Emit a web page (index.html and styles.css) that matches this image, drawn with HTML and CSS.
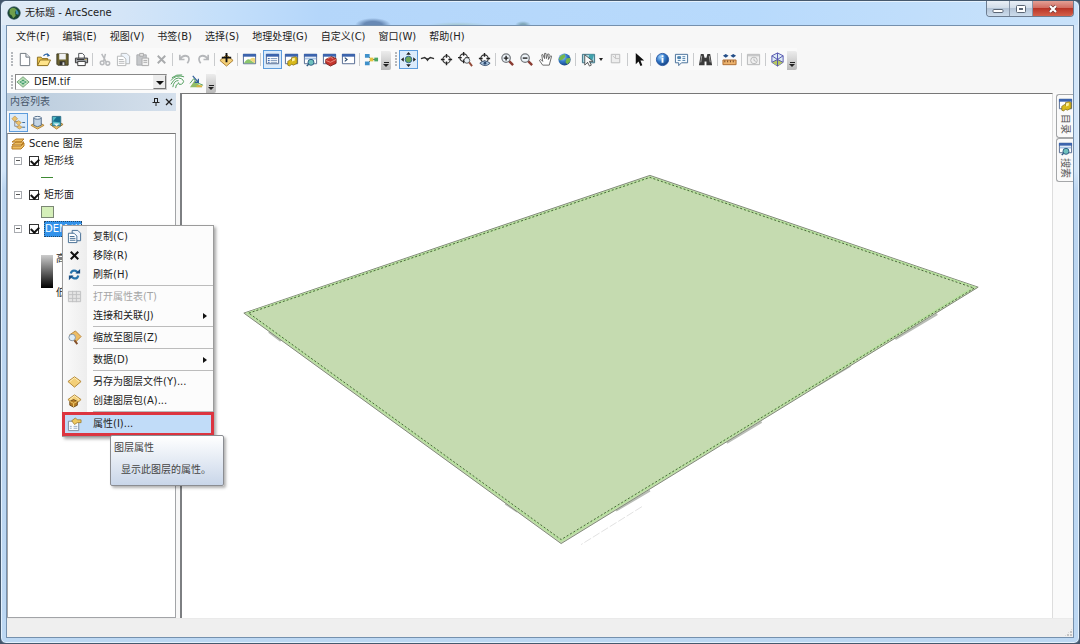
FILE: index.html
```html
<!DOCTYPE html>
<html lang="zh-CN">
<head>
    <meta charset="UTF-8">
    <meta name="viewport" content="width=device-width, initial-scale=1.0">
    <title>无标题 - ArcScene</title>
    <link rel="stylesheet" href="styles.css">
</head>
<body>
    <!-- Shared icons -->
    <svg class="defs" aria-hidden="true">
        <defs>
            <radialGradient id="globe" cx="35%" cy="30%" r="75%">
                <stop offset="0" stop-color="#a9d8ff"/>
                <stop offset="0.5" stop-color="#3279c9"/>
                <stop offset="1" stop-color="#173f7c"/>
            </radialGradient>
            <symbol id="i-window" viewBox="0 0 16 16">
                <path d="M1.500 2.500h13v10h-13z" fill="#fff" stroke="#51688f"/>
                <path d="M1 2h14v3H1z" fill="#3c64ad"/>
            </symbol>
            <symbol id="i-catalog" viewBox="0 0 16 16">
                <use href="#i-window"/>
                <path d="M4 10l3-2 1 1V6l4-1 2 1v6l-4 2-2-1-2 2-2-1z" fill="#d8b91c" stroke="#7a6510" stroke-width=".7"/>
                <path d="M8.500 7l3-1v3l-3 1z" fill="#fff3a0"/>
            </symbol>
            <symbol id="i-search" viewBox="0 0 16 16">
                <use href="#i-window"/>
                <path d="M2 6h12v2H2z" fill="#a9c5e6"/>
                <circle cx="8.500" cy="11" r="3.200" fill="#6fc0bd" stroke="#2c5c82"/>
                <path d="M6 13l-2 2" stroke="#2c5c82" stroke-width="1.500"/>
            </symbol>
            <symbol id="i-diamond" viewBox="0 0 16 16">
                <path d="M1 8l7-5 7 5-7 6z" fill="#f3cf78" stroke="#b18433"/>
                <path d="M3 8l5-4 5 4" fill="none" stroke="#fff0bd"/>
            </symbol>
            <symbol id="i-target" viewBox="0 0 16 16">
                <circle cx="8" cy="8" r="4" fill="none" stroke="#333" stroke-width="1.200"/>
                <path d="M8 2v4M8 10v4M2 8h4M10 8h4" stroke="#222" stroke-width="1.500"/>
            </symbol>
            <symbol id="i-copy" viewBox="0 0 16 16">
                <path d="M5.500 1.500h6l3 3v8h-9z" fill="#eef4fb" stroke="currentColor"/>
                <path d="M1.500 4.500h6l3 3v7h-9z" fill="#fff" stroke="currentColor"/>
                <path d="M3 8h5M3 10h6M3 12h6" stroke="currentColor"/>
            </symbol>
            <symbol id="i-glass" viewBox="0 0 16 16">
                <path d="M9 9l5 5" stroke="#8a3b32" stroke-width="2.500"/>
                <circle cx="6.500" cy="6.500" r="4.500" fill="#edf3f8" stroke="#73777c" stroke-width="1.300"/>
            </symbol>
            <symbol id="i-layer" viewBox="0 0 16 16">
                <path d="M1 8l7-6 7 6-7 6z" fill="#b9dfb5" stroke="#6c9a72"/>
                <path d="M4 8l4-3 4 3-4 3z" fill="#3f9c6d"/>
                <path d="M4 5.500l8 5M12 5.500l-8 5" stroke="#dff2dd" stroke-width=".8"/>
            </symbol>
        </defs>
    </svg>

    <div class="window">
        <header class="titlebar">
            <svg class="app-icon" viewBox="0 0 16 16"><circle cx="8" cy="8" r="7" fill="#1c4832"/><path d="M3 4q4-4 8 0l-2 3 1 4-3 3q-1-4-4-5z" fill="#6f9f4b"/><path d="M10 4q4 2 3 6l-3-1z" fill="#3b8cad"/><circle cx="8" cy="8" r="7" fill="none" stroke="#163c3d"/></svg>
            <h1 class="title">无标题 - ArcScene</h1>
            <div class="window-buttons">
                <button class="win-btn" aria-label="最小化"><svg viewBox="0 0 12 10"><rect x="1" y="5.500" width="10" height="3" rx="1" fill="#fff" stroke="#5b6675"/></svg></button>
                <button class="win-btn" aria-label="最大化"><svg viewBox="0 0 12 10"><rect x="1.500" y="1.500" width="9" height="7" rx="1" fill="#fff" stroke="#5b6675"/><rect x="4.500" y="4.500" width="3" height="1" fill="#8090a0" stroke="#5b6675"/></svg></button>
                <button class="win-btn close" aria-label="关闭"><svg viewBox="0 0 12 10"><path d="M3 2l6 6M9 2L3 8" stroke="#6d3330" stroke-width="3.500"/><path d="M3 2l6 6M9 2L3 8" stroke="#fff" stroke-width="2.200"/></svg></button>
            </div>
        </header>

        <div class="client">
            <nav class="menubar">
                <button>文件(F)</button>
                <button>编辑(E)</button>
                <button>视图(V)</button>
                <button>书签(B)</button>
                <button>选择(S)</button>
                <button>地理处理(G)</button>
                <button>自定义(C)</button>
                <button>窗口(W)</button>
                <button>帮助(H)</button>
            </nav>

            <div class="toolbar-row">
                <div class="toolbar">
                    <span class="grip"></span>
                    <button class="tool" aria-label="新建"><svg viewBox="0 0 16 16"><path d="M3.500 1.500h6l4 4v9h-10z" fill="#fff" stroke="#6d747c"/><path d="M9.500 1.500v4h4" fill="#e4e8ed" stroke="#6d747c"/></svg></button>
                    <button class="tool" aria-label="打开"><svg viewBox="0 0 16 16"><path d="M1.500 14V5.500h4l1 1.500h6v7z" fill="#e9c34f" stroke="#8b6d1c"/><path d="M1.500 14.500l3-6h11l-3 6z" fill="#ffe48a" stroke="#8b6d1c"/><path d="M8 4q3-3 5-1" fill="none" stroke="#2b64a5" stroke-width="1.300"/><path d="M12 1l3 3-3 1z" fill="#2b64a5"/></svg></button>
                    <button class="tool" aria-label="保存"><svg viewBox="0 0 16 16"><path d="M2 2h12v12H3l-1-1z" fill="#6c6331" stroke="#3e3b24"/><path d="M4.500 2h7v6h-7z" fill="#f1f2f3"/><path d="M5 10h6v4H5z" fill="#2f2f2f"/><path d="M8 11h2v3H8z" fill="#ddd"/></svg></button>
                    <button class="tool" aria-label="打印"><svg viewBox="0 0 16 16"><path d="M5 7V1.500h4l2 2V7" fill="#fff" stroke="#4b4e52"/><path d="M1.500 6.500h13v5h-13z" fill="#a5a9ad" stroke="#333"/><path d="M4 10h8v4.500H4z" fill="#fff" stroke="#333"/><path d="M3 8h8" stroke="#333"/><path d="M12 8h1" stroke="#e1bb31"/></svg></button>
                    <span class="sep"></span>
                    <button class="tool" aria-label="剪切" disabled><svg viewBox="0 0 16 16" fill="none" stroke="#b8babd" stroke-width="1.600"><path d="M5 2l5 9M9 2L7 10"/><circle cx="5.500" cy="11.500" r="2"/><circle cx="11.500" cy="12" r="2"/></svg></button>
                    <button class="tool muted" aria-label="复制" disabled><svg><use href="#i-copy"/></svg></button>
                    <button class="tool" aria-label="粘贴" disabled><svg viewBox="0 0 16 16"><path d="M2 3h10v11H2z" fill="#c5c7ca" stroke="#aaacaf"/><path d="M5 1.500h4v3H5z" fill="#e5e5e5" stroke="#aaa"/><path d="M7.500 6.500h7v8h-7z" fill="#f2f2f2" stroke="#aaa"/><path d="M9 9h4M9 11h4" stroke="#aaa"/></svg></button>
                    <button class="tool" aria-label="删除" disabled><svg viewBox="0 0 16 16"><path d="M4 4l8 8M12 4l-8 8" stroke="#a9abad" stroke-width="2"/></svg></button>
                    <span class="sep"></span>
                    <button class="tool" aria-label="撤消" disabled><svg viewBox="0 0 16 16" fill="none" stroke="#b5b7ba" stroke-width="1.800"><path d="M3 3v5h5M3 8q4-6 9-3 2 3-1 7"/></svg></button>
                    <button class="tool" aria-label="恢复" disabled><svg viewBox="0 0 16 16" fill="none" stroke="#b5b7ba" stroke-width="1.800"><path d="M13 3v5H8M13 8Q9 2 4 5q-2 3 1 7"/></svg></button>
                    <span class="sep"></span>
                    <button class="tool" aria-label="添加数据"><svg viewBox="0 0 16 16"><path d="M1 9l7-6 7 6-7 6z" fill="#f4cf76" stroke="#a97e32"/><path d="M8 1v10M3 6h10" stroke="#111" stroke-width="2"/></svg></button>
                    <span class="sep"></span>
                    <button class="tool" aria-label="地图窗口"><svg viewBox="0 0 16 16"><use href="#i-window"/><path d="M2 12q3-5 6-4l6 4z" fill="#8cc66e"/><path d="M8 8q3-3 6-1v5z" fill="#f1d77b"/></svg></button>
                    <span class="sep"></span>
                    <button class="tool active" aria-label="内容列表"><svg viewBox="0 0 16 16"><use href="#i-window"/><path d="M3 7h2M3 9h2M3 11h2" stroke="#285aa7"/><path d="M6 7h7M6 9h7M6 11h7" stroke="#7c96bb"/></svg></button>
                    <button class="tool" aria-label="目录"><svg><use href="#i-catalog"/></svg></button>
                    <button class="tool" aria-label="搜索"><svg><use href="#i-search"/></svg></button>
                    <button class="tool" aria-label="工具箱"><svg viewBox="0 0 16 16"><use href="#i-window"/><path d="M4 8l6-3 5 2v5l-6 3-5-3z" fill="#c5352d" stroke="#812621"/><path d="M6 7q3-3 6 0M4 9l5 2 6-3" fill="none" stroke="#ec9185"/></svg></button>
                    <button class="tool" aria-label="Python"><svg viewBox="0 0 16 16"><use href="#i-window"/><path d="M4 6l2.500 2L4 10" fill="none" stroke="#26466c" stroke-width="1.200"/></svg></button>
                    <span class="sep"></span>
                    <button class="tool" aria-label="模型构建器"><svg viewBox="0 0 16 16"><path d="M4 4l4 4-4 4M8 8h4" fill="none" stroke="#555"/><path d="M1 2h5v4H1zM1 10h5v4H1z" fill="#3f91ca"/><path d="M6 6h4v4H6z" fill="#e2c33e"/><path d="M11 6h4v4h-4z" fill="#4ba664"/></svg></button>
                    <button class="overflow" aria-label="工具栏选项"></button>
                </div>

                <div class="toolbar">
                    <span class="grip"></span>
                    <button class="tool active" aria-label="导航"><svg viewBox="0 0 16 16"><circle cx="8" cy="8" r="3.500" fill="#70a857" stroke="#2f6592"/><path d="M8 0l2.500 3h-5zM8 16l2.500-3h-5zM0 8l3-2.500v5zM16 8l-3-2.500v5z" fill="#222"/></svg></button>
                    <button class="tool" aria-label="飞行"><svg viewBox="0 0 16 16"><path d="M1 7l4-1 3 2 3-2 4 1" fill="none" stroke="#333" stroke-width="1.500"/><path d="M6 7h4l-2 3z" fill="#333"/></svg></button>
                    <button class="tool" aria-label="目标处居中"><svg><use href="#i-target"/></svg></button>
                    <button class="tool" aria-label="缩放至目标"><svg viewBox="0 0 16 16"><use href="#i-target" x="-2" y="-2"/><circle cx="9.500" cy="9" r="3" fill="#e8eff5" stroke="#555"/><path d="M12 11l3 4" stroke="#934a38" stroke-width="2"/></svg></button>
                    <button class="tool" aria-label="设置观察点"><svg viewBox="0 0 16 16"><use href="#i-target" y="-1"/><path d="M3 12q5-5 11 0-5 5-11 0z" fill="#a9c4de" stroke="#3b5270"/><circle cx="8.500" cy="12" r="1.500" fill="#2d4a70"/></svg></button>
                    <span class="sep"></span>
                    <button class="tool" aria-label="放大"><svg viewBox="0 0 16 16"><use href="#i-glass"/><path d="M4 6.500h5M6.500 4v5" stroke="#222" stroke-width="1.500"/></svg></button>
                    <button class="tool" aria-label="缩小"><svg viewBox="0 0 16 16"><use href="#i-glass"/><path d="M4 6.500h5" stroke="#222" stroke-width="1.500"/></svg></button>
                    <button class="tool" aria-label="平移"><svg viewBox="0 0 16 16"><path d="M5 14L1.500 9l1.500-1 2 2-1-7 1-.5L7 7V1.500h1.500L9 7l1.500-5 1.500.5L11 8l2.500-4 1 .5L12 14z" fill="#fff" stroke="#555" stroke-width=".9"/></svg></button>
                    <button class="tool" aria-label="全图"><svg viewBox="0 0 16 16"><circle cx="8" cy="8" r="6.500" fill="url(#globe)"/><path d="M4 4l4-2 1 3-3 3-3 1-1-2zM10 7l4-1v4l-3 3-2-2z" fill="#75b74b"/></svg></button>
                    <span class="sep"></span>
                    <button class="tool with-arrow" aria-label="选择要素"><svg viewBox="0 0 16 16"><path d="M1.500 2.500h13v9h-13z" fill="#a9d6de" stroke="#3c6f81"/><path d="M9 2l5 1-2 6-4-2z" fill="#41a2ad"/><path d="M4 3v11l3-3 2 4 2-1-2-4h4z" fill="#f8f8f8" stroke="#333" stroke-width=".8"/></svg><span class="arrow-down"></span></button>
                    <button class="tool" aria-label="清除所选要素" disabled><svg viewBox="0 0 16 16"><path d="M3.500 2.500h9v9h-9z" fill="#eee" stroke="#b9babb"/><path d="M5 4l3 3M8 3v4h4" fill="none" stroke="#c4c4c4"/></svg></button>
                    <span class="sep wide"></span>
                    <button class="tool" aria-label="选择元素"><svg viewBox="0 0 16 16"><path d="M4 1v12l3-3 2 5 2-1-2-5h4z" fill="#111"/></svg></button>
                    <span class="sep"></span>
                    <button class="tool" aria-label="识别"><svg viewBox="0 0 16 16"><circle cx="8" cy="8" r="6.500" fill="url(#globe)" stroke="#2959a4"/><path d="M8 6.500v5M8 3.500v2" stroke="#fff" stroke-width="2"/></svg></button>
                    <button class="tool" aria-label="HTML 弹出窗口"><svg viewBox="0 0 16 16"><path d="M1.500 2.500h13v9H8l-3 3v-3H1.500z" fill="#f5fbff" stroke="#456d96"/><path d="M4 5h3v2H4zM9 5h3M4 9h3M9 7h3M9 9h3" fill="#4c8dbd" stroke="#4c7ca8"/></svg></button>
                    <span class="sep wide"></span>
                    <button class="tool" aria-label="查找"><svg viewBox="0 0 16 16"><path d="M3 2h3l1 4h2l1-4h3l2 12H9v-4H7v4H1z" fill="#3a3a3a"/><path d="M4 4L3 11M12 4l1 7" stroke="#aaa"/></svg></button>
                    <span class="sep wide"></span>
                    <button class="tool" aria-label="测量"><svg viewBox="0 0 16 16"><path d="M1 4l3-2v4zM7 4L4 2v4zM9 4l3-2v4zM15 4l-3-2v4z" fill="#244e88"/><path d="M1 8.500h14v5H1z" fill="#edb36e" stroke="#ad6b30"/><path d="M3 9v2M6 9v2M9 9v2M12 9v2" stroke="#724522"/></svg></button>
                    <span class="sep wide"></span>
                    <button class="tool" aria-label="时间滑块" disabled><svg viewBox="0 0 16 16" fill="#f0f0f0" stroke="#b5b6b7"><path d="M1.500 2.500h13v11h-13zM2 4h12"/><circle cx="8.500" cy="9" r="3.500"/><path d="M8.500 7v2l2 1"/></svg></button>
                    <span class="sep wide"></span>
                    <button class="tool" aria-label="新建查看器"><svg viewBox="0 0 16 16"><path d="M8 1l6 3v7l-6 4-6-4V4z" fill="#dceaf4" stroke="#5353ae"/><path d="M2 11l6-3 6 3-6 4z" fill="#b6c861"/><path d="M2 4l6 4 6-4M8 1v14M2 11l6-3 6 3" fill="none" stroke="#5353ae"/></svg></button>
                    <button class="overflow" aria-label="工具栏选项"></button>
                </div>
            </div>

            <div class="toolbar-row layer-row">
                <div class="toolbar">
                    <span class="grip"></span>
                    <div class="combo">
                        <svg class="combo-icon"><use href="#i-layer"/></svg>
                        <select aria-label="图层"><option>DEM.tif</option></select>
                        <span class="combo-arrow"></span>
                    </div>
                    <button class="tool" aria-label="创建等值线"><svg viewBox="0 0 16 16" fill="none" stroke="#4c9c59"><path d="M1 7q5-7 14-4M1 11q5-9 11-6 5 3 0 6-3 1-3-2M3 14q1-7 6-7M6 15q0-4 3-5M2 4q5-4 11-3"/></svg></button>
                    <button class="tool" aria-label="创建最陡路径"><svg viewBox="0 0 16 16"><path d="M1 14l5-7 3 3 5 4z" fill="#91bd66"/><path d="M1 10l4-5 3 4 7 3" fill="none" stroke="#4d9d58"/><path d="M4 2l6 7M10 5v4H6" fill="none" stroke="#315f9a" stroke-width="1.300"/><path d="M8 13h6" stroke="#d7b33f" stroke-width="2"/></svg></button>
                    <button class="overflow" aria-label="工具栏选项"></button>
                </div>
            </div>

            <main class="workspace">
                <section class="toc">
                    <div class="toc-header">
                        <h2>内容列表</h2>
                        <button aria-label="自动隐藏"><svg viewBox="0 0 10 10" fill="none" stroke="#222"><path d="M3.500 1v4M3 1.500h4M6.500 1v4M1.500 5.500h7M5 6v3"/></svg></button>
                        <button aria-label="关闭"><svg viewBox="0 0 10 10"><path d="M2 2l6 6M8 2L2 8" stroke="#222" stroke-width="1.300"/></svg></button>
                    </div>
                    <div class="toc-tools">
                        <button class="tool active" aria-label="按绘制顺序列出"><svg viewBox="0 0 16 16"><path d="M4 5v7h5M4 7h5" fill="none" stroke="#888"/><path d="M1 4l3-3 3 3-3 3zM5 8l3-2 3 2-3 3zM6 13l3-2 3 2-3 2z" fill="#edc26b" stroke="#ad823c" stroke-width=".6"/><path d="M12 8h3M12 13h3" stroke="#356596"/></svg></button>
                        <button class="tool" aria-label="按源列出"><svg viewBox="0 0 16 16"><path d="M1 11l7-4 7 4-7 4z" fill="#efc365" stroke="#b1843b"/><path d="M4 3v8q4 3 8 0V3" fill="#c4d5e6" stroke="#506985"/><ellipse cx="8" cy="3" rx="4" ry="1.500" fill="#edf5fc" stroke="#506985"/></svg></button>
                        <button class="tool" aria-label="按可见性列出"><svg viewBox="0 0 16 16"><path d="M1 10l7-4 7 4-7 5z" fill="#efc365" stroke="#a87c34"/><path d="M3.500 1.500h9v10h-9z" fill="#57bdc6" stroke="#2b6983"/><path d="M4 7l4-5h4v6z" fill="#166f8d"/><path d="M5 9l3 3 3-3" fill="#e9f4f7"/></svg></button>
                    </div>
                    <div class="tree">
                        <div class="tree-row root">
                            <svg class="root-icon" viewBox="0 0 14 14"><path d="M1 5l4-3h8l-3 3zM1 8l4-3h8l-3 3zM1 12V9h9l3-3v3l-3 3z" fill="#edbd60" stroke="#b77c25"/></svg>
                            <span>Scene 图层</span>
                        </div>
                        <div class="tree-row">
                            <button class="expander" aria-label="折叠"></button>
                            <label><input type="checkbox" checked><span>矩形线</span></label>
                        </div>
                        <div class="tree-row symbol"><span class="line-symbol"></span></div>
                        <div class="tree-row">
                            <button class="expander" aria-label="折叠"></button>
                            <label><input type="checkbox" checked><span>矩形面</span></label>
                        </div>
                        <div class="tree-row symbol"><span class="fill-symbol"></span></div>
                        <div class="tree-row">
                            <button class="expander" aria-label="折叠"></button>
                            <label><input type="checkbox" checked><span class="selected">DEM.tif</span></label>
                        </div>
                        <div class="ramp">
                            <span class="ramp-bar"></span>
                            <div class="ramp-labels"><span>高</span><span>低</span></div>
                        </div>
                    </div>
                </section>

                <section class="scene">
                    <svg viewBox="-1 0 872 524" preserveAspectRatio="xMidYMid meet">
                        <path d="M460 413L399 451" stroke="#e2e2e2" stroke-width="1" stroke-dasharray="8 2"/>
                        <path d="M86 238L98 247M323 410l12 8M434 417l34-20M545 349l35-21M637 291l32-19M714 245l42-25" stroke="#b9bdb6" stroke-width="2"/>
                        <path d="M61 219L468 81l329 112-418 257z" fill="#c5dbb0" stroke="#818a78"/>
                        <path d="M65 219L468 83l325 110-414 254z" fill="none" stroke="#b6e09d" stroke-width="2"/>
                        <path d="M66 219L468 83l325 111-414 252z" fill="none" stroke="#4d633e" stroke-width="1" stroke-dasharray="2 2"/>
                    </svg>
                </section>

                <aside class="dock-tabs">
                    <button><svg><use href="#i-catalog"/></svg><span>目录</span></button>
                    <button><svg><use href="#i-search"/></svg><span>搜索</span></button>
                </aside>
            </main>

            <footer class="statusbar"><span class="resize-grip"></span></footer>
        </div>

        <!-- Layer context menu -->
        <div class="context-menu" role="menu">
            <button role="menuitem"><svg class="blue"><use href="#i-copy"/></svg>复制(C)</button>
            <button role="menuitem"><svg viewBox="0 0 16 16"><path d="M4 4l8 8M12 4l-8 8" stroke="#111" stroke-width="2.200"/></svg>移除(R)</button>
            <button role="menuitem"><svg viewBox="0 0 16 16"><path d="M4 7q1-4 5-3l3 2M12 9q-1 4-5 3l-3-2" fill="none" stroke="#2874ac" stroke-width="2.400"/><path d="M9 7h5V2zM7 9H2v5z" fill="#1b4e83"/></svg>刷新(H)</button>
            <hr>
            <button role="menuitem" disabled><svg viewBox="0 0 16 16"><path d="M1.500 2.500h13v11h-13zM2 6h12M2 10h12M6 2v12M10 2v12" fill="#e4e4e4" stroke="#bfc0c1"/></svg>打开属性表(T)</button>
            <button role="menuitem" class="submenu"><svg></svg>连接和关联(J)</button>
            <hr>
            <button role="menuitem"><svg viewBox="0 0 16 16"><path d="M3 5l6-4 6 6-6 6z" fill="#edbd65" stroke="#b68337"/><circle cx="5.500" cy="8" r="3.500" fill="#deedf8" stroke="#8292a3"/><path d="M8 11l3 4" stroke="#82502b" stroke-width="2"/></svg>缩放至图层(Z)</button>
            <hr>
            <button role="menuitem" class="submenu"><svg></svg>数据(D)</button>
            <hr>
            <button role="menuitem"><svg><use href="#i-diamond"/></svg>另存为图层文件(Y)...</button>
            <button role="menuitem"><svg viewBox="0 0 16 16"><use href="#i-diamond" y="-1"/><path d="M3 9l4-2 4 2v4l-4 2-4-2z" fill="#b47b24" stroke="#6d4b1b"/><path d="M3 9l4 2 4-2M7 11v4" fill="none" stroke="#f2ce70"/></svg>创建图层包(A)...</button>
            <hr>
            <button role="menuitem" class="highlight"><svg viewBox="0 0 16 16"><path d="M1.500 4.500h11v10h-11z" fill="#f8fbfd" stroke="#7d8999"/><path d="M3 10h2M7 10h4M3 12h2M7 12h4" stroke="#96aac2"/><path d="M5 4l4-3 2 2h4v3h-4L8 8z" fill="#eec95f" stroke="#98762c" stroke-width=".8"/></svg>属性(I)...</button>
        </div>

        <div class="tooltip" role="tooltip">
            <strong>图层属性</strong>
            <p>显示此图层的属性。</p>
        </div>
    </div>
</body>
</html>
```

FILE: styles.css
```css
/* Reset and Base Styles */
* {
    margin: 0;
    padding: 0;
    box-sizing: border-box;
}

body {
    font-family: "DejaVu Sans", "Noto Sans CJK SC", sans-serif;
    font-size: 10px;
    line-height: 16px;
    color: #222;
    background-color: #43566c;
}

button,
select {
    font: inherit;
    color: inherit;
    border: none;
    background: none;
}

svg {
    display: block;
    flex-shrink: 0;
}

.defs {
    position: absolute;
    width: 0;
    height: 0;
}

/* Window frame */
.window {
    position: relative;
    display: flex;
    flex-direction: column;
    height: 100vh;
    padding: 0 5px 5px;
    border: 1px solid #46596e;
    border-radius: 6px;
    box-shadow: inset 0 0 0 1px #e4f1fd;
    background: linear-gradient(#d3e6f9 0, #d3e6f9 170px, #bbd5f0 190px, #bdd8f3 100%);
}

.titlebar {
    display: flex;
    align-items: center;
    gap: 4px;
    height: 24px;
    margin: 0 -4px;
    padding: 0 4px 0 5px;
    border-radius: 5px 5px 0 0;
    /* desktop shapes showing through the glass */
    background:
        radial-gradient(ellipse 18px 7px at 371px 24px, #6889b4 50%, transparent),
        radial-gradient(ellipse 8px 4px at 521px 24px, #7fa6b8 30%, transparent),
        radial-gradient(ellipse 30px 3px at 456px 24px, #a5c7cf, transparent),
        linear-gradient(90deg, #e0ebf6, #d4e5f7 120px, #c4dffa 220px, #b4d6fa 320px, #b8dafc 70%, #c9e2fa);
    box-shadow: inset 0 1px #e4f1fd;
}

.app-icon {
    width: 14px;
    height: 14px;
}

.title {
    flex: 1;
    font-size: 10px;
    font-weight: normal;
}

.window-buttons {
    display: flex;
    align-self: flex-start;
    border: 1px solid #6c7c90;
    border-top: none;
    border-radius: 0 0 4px 4px;
    overflow: hidden;
}

.win-btn {
    display: flex;
    align-items: center;
    justify-content: center;
    width: 23px;
    height: 15px;
    border-right: 1px solid #8795a8;
    background: linear-gradient(#e9eff6, #d0dbe8 50%, #b4c4d7 50%, #ccdcec);
}

.win-btn svg {
    width: 12px;
    height: 10px;
}

.win-btn.close {
    width: 40px;
    border-right: none;
    background: linear-gradient(#e3a095, #d0685c 50%, #b93527 50%, #d4604a);
}

.client {
    flex: 1;
    display: flex;
    flex-direction: column;
    min-height: 0;
    border: 1px solid #7590ad;
    background-color: #f7f7f7;
}

/* Menu bar */
.menubar {
    display: flex;
    align-items: center;
    height: 22px;
    padding-left: 3px;
}

.menubar button {
    padding: 0 7px 0 6px;
}

/* Toolbars */
.toolbar-row {
    display: flex;
    height: 22px;
}

.toolbar {
    display: flex;
    align-items: center;
    background-color: #fafafa;
}

.grip {
    width: 3px;
    height: 14px;
    margin: 0 1px 0 4px;
    background: radial-gradient(circle at 1px 1px, #b5b8bc 1px, transparent 1px) 0 0 / 3px 3px;
}

.tool {
    display: flex;
    align-items: center;
    justify-content: center;
    width: 19px;
    height: 19px;
}

.tool svg {
    width: 15px;
    height: 15px;
}

.tool.active {
    border: 1px solid #5d9cdc;
    background-color: #dbebfb;
}

.tool.muted {
    color: #b4b6b8;
}

.tool.with-arrow {
    gap: 3px;
    width: 28px;
}

.arrow-down {
    border: 2px solid transparent;
    border-top: 3px solid #222;
    border-bottom: none;
}

.sep {
    width: 1px;
    height: 13px;
    margin: 0 2px 0 1px;
    background-color: #c9cbcd;
}

.sep.wide {
    margin: 0 2px;
}

.overflow {
    display: flex;
    flex-direction: column;
    align-items: center;
    justify-content: flex-end;
    gap: 1px;
    align-self: flex-end;
    width: 10px;
    height: 19px;
    padding-bottom: 3px;
    border-radius: 0 2px 2px 0;
    background: linear-gradient(#ececec, #b9b9b9);
}

.overflow::before {
    content: "";
    width: 5px;
    height: 1px;
    background-color: #222;
}

.overflow::after {
    content: "";
    border: 3px solid transparent;
    border-top-color: #222;
    border-bottom: none;
}

.layer-row {
    height: 23px;
}

.combo {
    position: relative;
    width: 152px;
    margin-right: 1px;
}

.combo select {
    appearance: none;
    display: block;
    width: 100%;
    height: 16px;
    padding-left: 18px;
    border: 1px solid #888;
    border-right-color: #ccc;
    border-bottom-color: #ccc;
    background-color: #fff;
    line-height: 14px;
}

.combo-icon {
    position: absolute;
    left: 1px;
    top: 1px;
    width: 14px;
    height: 14px;
}

.combo-arrow {
    position: absolute;
    right: 1px;
    top: 1px;
    width: 13px;
    height: 14px;
    border: 1px solid;
    border-color: #eee #777 #777 #eee;
    background-color: #ececec;
    pointer-events: none;
}

.combo-arrow::after {
    content: "";
    position: absolute;
    left: 2px;
    top: 5px;
    border: 4px solid transparent;
    border-top-color: #111;
    border-bottom: none;
}

/* Workspace */
.workspace {
    flex: 1;
    display: flex;
    min-height: 0;
}

.toc {
    display: flex;
    flex-direction: column;
    width: 169px;
    margin-right: 4px;
}

.toc-header {
    display: flex;
    align-items: center;
    gap: 3px;
    height: 18px;
    padding: 0 2px 0 3px;
    background: linear-gradient(90deg, #b9cbdc, #d5e0ec);
}

.toc-header h2 {
    flex: 1;
    font-size: 10px;
    font-weight: normal;
    color: #46566a;
}

.toc-header svg {
    width: 10px;
    height: 10px;
}

.toc-tools {
    display: flex;
    align-items: center;
    height: 22px;
    padding-left: 2px;
}

.tree {
    flex: 1;
    padding-top: 1px;
    border: 1px solid #a2a4a7;
    border-top-color: #777;
    background-color: #fff;
}

.tree-row {
    display: flex;
    align-items: center;
    gap: 7px;
    height: 17px;
    padding-left: 6px;
}

.tree-row.root {
    padding-left: 3px;
    gap: 4px;
}

.root-icon {
    width: 14px;
    height: 14px;
}

.tree-row label {
    display: flex;
    align-items: center;
    gap: 5px;
}

.expander {
    width: 8px;
    height: 8px;
    border: 1px solid #a8abb0;
    background: linear-gradient(#555, #555) center / 4px 1px no-repeat #fff;
}

.tree-row input {
    appearance: none;
    width: 10px;
    height: 10px;
    border: 1px solid #333;
    background-color: #fff;
}

.tree-row input:checked::after {
    content: "";
    display: block;
    width: 6px;
    height: 4px;
    margin: 1px;
    border: solid #111;
    border-width: 0 0 2px 2px;
    transform: rotate(-45deg);
}

.selected {
    padding: 0 1px;
    color: #fff;
    background-color: #3292ea;
    outline: 1px dotted #24496b;
    outline-offset: -1px;
}

.tree-row.symbol {
    padding-left: 33px;
}

.line-symbol {
    width: 12px;
    height: 1px;
    background-color: #3d8a33;
}

.fill-symbol {
    width: 13px;
    height: 12px;
    border: 1px solid #7b8774;
    background-color: #d5efb9;
}

.ramp {
    display: flex;
    align-items: flex-start;
    gap: 3px;
    height: 50px;
    margin-top: 14px;
    padding-left: 33px;
}

.ramp-bar {
    width: 12px;
    height: 33px;
    margin-top: 4px;
    background: linear-gradient(#ccc, #000);
}

.ramp-labels {
    display: flex;
    flex-direction: column;
    justify-content: space-between;
    align-self: stretch;
}

.scene {
    flex: 1;
    min-width: 0;
    border-left: 2px solid #7d7f82;
    border-top: 1px solid #777;
    border-right: 1px solid #ddd;
    background-color: #fff;
}

.scene svg {
    width: 100%;
    height: 100%;
}

.dock-tabs {
    display: flex;
    flex-direction: column;
    width: 20px;
    padding: 1px 0 0 3px;
    background-color: #fafafa;
}

.dock-tabs button {
    display: flex;
    flex-direction: column;
    align-items: center;
    gap: 2px;
    height: 44px;
    padding-top: 2px;
    border: 1px solid #a5a7a9;
    border-right: none;
    border-radius: 3px 0 0 3px;
    color: #555;
}

.dock-tabs svg {
    width: 15px;
    height: 15px;
}

.dock-tabs span {
    writing-mode: vertical-rl;
    text-orientation: sideways;
}

.statusbar {
    display: flex;
    align-items: flex-end;
    justify-content: flex-end;
    height: 19px;
    border-top: 1px solid #eaeaea;
    background-color: #efefef;
}

.resize-grip {
    width: 9px;
    height: 9px;
    background: radial-gradient(circle at 1px 1px, #c4c4c4 1px, transparent 1px) 0 0 / 3px 3px;
    clip-path: polygon(100% 0, 100% 100%, 0 100%);
}

/* Context menu */
.context-menu {
    position: absolute;
    left: 61px;
    top: 224px;
    width: 152px;
    padding: 1px 0;
    border: 1px solid #9b9b9b;
    background: linear-gradient(90deg, #fafafa, #ededed 24px, #fcfcfc 24px);
    box-shadow: 2px 2px 3px rgba(0, 0, 0, 0.35);
}

.context-menu button {
    display: flex;
    align-items: center;
    gap: 11px;
    width: 100%;
    height: 19px;
    padding-left: 4px;
    text-align: left;
}

.context-menu button:disabled {
    color: #a5a5a5;
}

.context-menu svg {
    width: 15px;
    height: 15px;
}

.context-menu .blue {
    color: #416b91;
}

.context-menu hr {
    height: 1px;
    margin: 1px 0 1px 30px;
    border: none;
    background-color: #bcbcbc;
}

.context-menu .submenu::after {
    content: "";
    margin: 0 6px 0 auto;
    border: 3px solid transparent;
    border-left: 4px solid #111;
    border-right: none;
}

.context-menu .highlight {
    height: 22px;
    background-color: #c1dcf8;
    outline: 3px solid #dc3540;
    outline-offset: -2px;
}

.tooltip {
    position: absolute;
    left: 109px;
    top: 434px;
    width: 114px;
    padding: 4px 3px 7px;
    border: 1px solid #8b8d92;
    border-radius: 2px;
    background: linear-gradient(#fff, #c9d6e9);
    box-shadow: 2px 2px 3px rgba(0, 0, 0, 0.3);
    color: #444;
}

.tooltip strong {
    display: block;
    font-weight: normal;
}

.tooltip p {
    margin-top: 6px;
    padding-left: 7px;
    white-space: nowrap;
}
```
